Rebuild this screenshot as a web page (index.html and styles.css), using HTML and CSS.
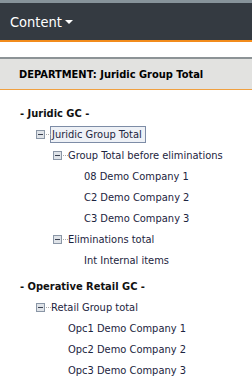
FILE: index.html
```html
<!DOCTYPE html>
<html>
<head>
<meta charset="utf-8">
<link rel="stylesheet" href="styles.css">
</head>
<body>
<header class="topbar">
  <span class="brand">Content</span><span class="caret"></span>
</header>
<section class="dept">DEPARTMENT: Juridic Group Total</section>
<div class="tree">
  <div class="group">- Juridic GC -</div>
  <div class="row l1"><span class="tog"></span><span class="sel">Juridic Group Total</span></div>
  <div class="row l2"><span class="tog"></span><span>Group Total before eliminations</span></div>
  <div class="row l3"><span>08 Demo Company 1</span></div>
  <div class="row l3"><span>C2 Demo Company 2</span></div>
  <div class="row l3"><span>C3 Demo Company 3</span></div>
  <div class="row l2"><span class="tog"></span><span>Eliminations total</span></div>
  <div class="row l3"><span>Int Internal items</span></div>
  <div class="group g2">- Operative Retail GC -</div>
  <div class="row l1"><span class="tog"></span><span>Retail Group total</span></div>
  <div class="row l2b"><span>Opc1 Demo Company 1</span></div>
  <div class="row l2b"><span>Opc2 Demo Company 2</span></div>
  <div class="row l2b"><span>Opc3 Demo Company 3</span></div>
</div>
</body>
</html>
```
FILE: styles.css
```css
html, body { margin: 0; padding: 0; background: #fff; }
body { font-family: "DejaVu Sans Condensed", "Liberation Sans", sans-serif; color: #1c2440; width: 252px; overflow: hidden; }
.topbar {
  height: 37px;
  background: #343a41;
  border-top: 3px solid #87939a;
  border-bottom: 2px solid #f28c1c;
  display: flex; align-items: center;
  padding-left: 10px;
  box-sizing: content-box;
}
.brand { color: #fff; font-size: 14.5px; }
.caret { width: 0; height: 0; border-left: 4px solid transparent; border-right: 4px solid transparent; border-top: 4px solid #fff; margin-left: 3px; margin-top: 1px; }
.dept {
  margin-top: 15px;
  height: 30px;
  background: #e2e2e0;
  border-top: 2px solid #8c9396;
  border-bottom: 1px solid #f0a040;
  display: flex; align-items: center;
  padding-left: 19px;
  font-weight: bold; font-size: 11px; color: #000;
}
.tree { padding-top: 14px; font-size: 11px; }
.group { font-weight: bold; color: #111; padding-left: 20px; height: 20px; line-height: 20px; font-size: 11px; }
.g2 { margin-top: 6px; }
.row { height: 21px; display: flex; align-items: center; }
.l1 { padding-left: 36px; }
.l2 { padding-left: 53px; }
.l3 { padding-left: 84px; }
.l2b { padding-left: 68px; }
.tog {
  width: 7px; height: 7px; border: 1px solid #8a96a6; background: #dfe3e8; position: relative; margin-right: 6px; flex: none;
}
.tog::before { content: ""; position: absolute; left: 1px; top: 3px; width: 5px; height: 1px; background: #3a4050; }
.tog::after { content: ""; position: absolute; left: 9px; top: 3px; width: 5px; border-top: 1px dotted #aaa; }
.sel { border: 1px solid #7d8ca6; background: #eef1f6; padding: 0 3px 0 1px; line-height: 15px; margin-left: -1px; }
```
